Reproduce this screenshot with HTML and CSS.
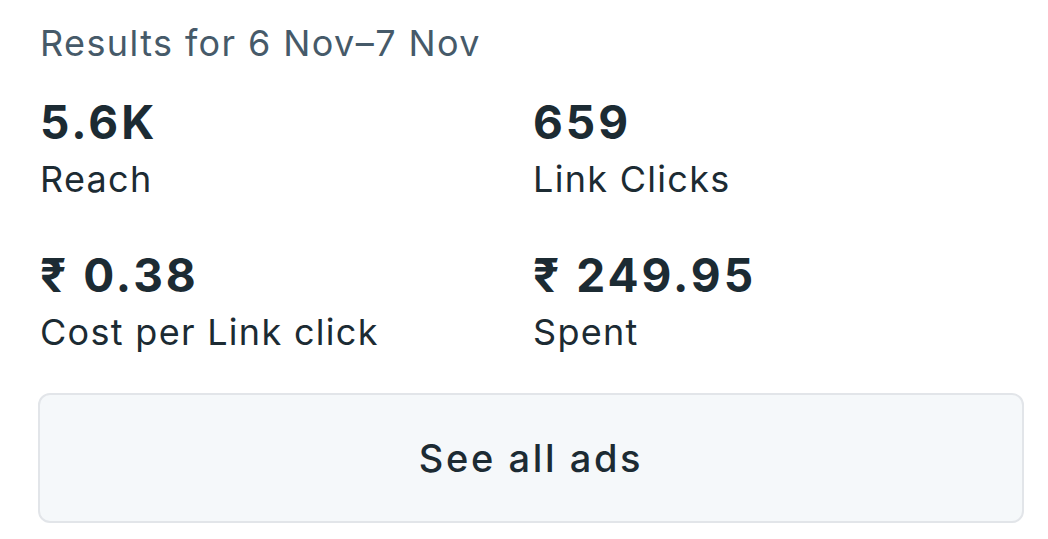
FILE: index.html
```html
<!DOCTYPE html>
<html>
<head>
<meta charset="utf-8">
<link rel="stylesheet" href="styles.css">
</head>
<body>
<div class="card">
  <div class="title">Results for 6 Nov–7 Nov</div>
  <div class="grid">
    <div class="stat">
      <div class="value">5.6K</div>
      <div class="label">Reach</div>
    </div>
    <div class="stat">
      <div class="value">659</div>
      <div class="label">Link Clicks</div>
    </div>
    <div class="stat">
      <div class="value">₹ 0.38</div>
      <div class="label">Cost per Link click</div>
    </div>
    <div class="stat">
      <div class="value">₹ 249.95</div>
      <div class="label">Spent</div>
    </div>
  </div>
  <button class="btn">See all ads</button>
</div>
</body>
</html>
```

FILE: styles.css
```css
html, body {
  margin: 0;
  padding: 0;
  background: #ffffff;
}
body {
  font-family: Inter, "Noto Sans", sans-serif;
}
.card {
  padding: 21px 24px 0 38px;
}
.title {
  font-size: 36px;
  line-height: 44px;
  letter-spacing: 1.4px;
  color: #465a69;
  padding-left: 2px;
}
.grid {
  display: grid;
  grid-template-columns: 493px 1fr;
  row-gap: 47px;
  margin-top: 31px;
  padding-left: 2px;
}
.value {
  font-size: 46px;
  font-weight: 700;
  line-height: 52px;
  letter-spacing: 3px;
  color: #1c2b33;
}
.label {
  margin-top: 8px;
  font-size: 36px;
  line-height: 46px;
  letter-spacing: 1.3px;
  color: #1c2b33;
}
.btn {
  display: block;
  width: 986px;
  height: 130px;
  margin-top: 38px;
  padding: 0;
  border: 2px solid #e2e5e9;
  border-radius: 12px;
  background: #f5f8fa;
  font-family: inherit;
  font-size: 38px;
  font-weight: 500;
  letter-spacing: 2.6px;
  color: #1c2b33;
}
```
